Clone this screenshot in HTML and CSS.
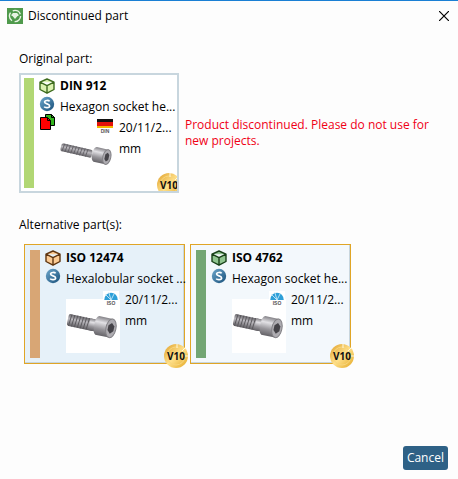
FILE: index.html
```html
<!DOCTYPE html>
<html lang="en">
<head>
  <meta charset="UTF-8">
  <meta name="viewport" content="width=device-width, initial-scale=1">
  <title>Discontinued part</title>
  <link rel="stylesheet" href="styles.css">
</head>
<body>

  <!-- shared icons -->
  <svg class="sprite" aria-hidden="true">
    <defs>
      <linearGradient id="blueBall" x1="0" y1="0" x2="1" y2="1">
        <stop offset="0" stop-color="#6fa8cc"/>
        <stop offset="1" stop-color="#174f7a"/>
      </linearGradient>
      <linearGradient id="gold" x1="0" y1="0" x2="1" y2="1">
        <stop offset="0" stop-color="#dfa02a"/>
        <stop offset="0.5" stop-color="#ffe08a"/>
        <stop offset="1" stop-color="#e3a620"/>
      </linearGradient>
      <linearGradient id="steel" x1="0" y1="0" x2="0" y2="1">
        <stop offset="0" stop-color="#858388"/>
        <stop offset="0.3" stop-color="#e2e1e5"/>
        <stop offset="0.65" stop-color="#98969b"/>
        <stop offset="1" stop-color="#656368"/>
      </linearGradient>
      <linearGradient id="thread" x1="0" y1="0" x2="0" y2="1">
        <stop offset="0" stop-color="#656368"/>
        <stop offset="0.4" stop-color="#bcbabf"/>
        <stop offset="1" stop-color="#5f5d62"/>
      </linearGradient>
    </defs>

    <symbol id="cube" viewBox="0 0 16 16">
      <path d="M8 1 15 4.2V11.5L8 15.2 1 11.5V4.2Z M1 4.2 8 7.6 15 4.2 M8 7.6V15.2"
            stroke="currentColor" stroke-width="1.4" stroke-linejoin="round"/>
    </symbol>

    <symbol id="standard" viewBox="0 0 16 16">
      <circle cx="8" cy="8" r="7.2" fill="url(#blueBall)"/>
      <path d="M10.6 5.4C9.9 4.2 5.6 3.9 5.6 6.1 5.6 8.3 10.6 7.4 10.6 9.9 10.6 12.2 6 12 5.2 10.6"
            fill="none" stroke="#fff" stroke-width="1.7"/>
    </symbol>

    <symbol id="screw" viewBox="0 0 54 30">
      <g transform="rotate(12 27 15)">
        <rect x="1" y="8" width="28" height="12" rx="2" fill="url(#thread)"/>
        <path d="M4 8l-1 12M7 8l-1 12M10 8l-1 12M13 8l-1 12M16 8l-1 12M19 8l-1 12M22 8l-1 12"
              stroke="#59575c" stroke-width="0.9"/>
        <rect x="23" y="8" width="7" height="12" fill="url(#steel)"/>
        <path d="M31 4H45V23H31Q28 22 28 13.5 28 5 31 4Z" fill="url(#steel)"/>
        <ellipse cx="45" cy="13.5" rx="5" ry="9.5" fill="#aeacb1" stroke="#828085"/>
        <path d="M45 8 48 11V16L45 19 42 16V11Z" fill="#454348"/>
      </g>
    </symbol>

    <symbol id="screwLong" viewBox="0 0 54 30">
      <g transform="rotate(13 27 15)">
        <rect x="0" y="10" width="32" height="8" rx="2" fill="url(#thread)"/>
        <path d="M3 10l-1 8M6 10l-1 8M9 10l-1 8M12 10l-1 8M15 10l-1 8M18 10l-1 8M21 10l-1 8M24 10l-1 8M27 10l-1 8"
              stroke="#605e63" stroke-width="0.8"/>
        <path d="M35 6H47V21H35Q32 20 32 13.5 32 7 35 6Z" fill="url(#steel)"/>
        <ellipse cx="47" cy="13.5" rx="4" ry="7.5" fill="#aeacb1" stroke="#828085"/>
        <path d="M47 9 49 11V16L47 18 45 16V11Z" fill="#454348"/>
      </g>
    </symbol>

    <symbol id="isoArc" viewBox="0 0 14 8">
      <path d="M1 8A6 6.500 0 0 1 13 8Z" fill="#2d9fd8"/>
      <path d="M7 8 2 3M7 8 5 1M7 8 10 2" stroke="#c9e9f8" stroke-width="0.8"/>
    </symbol>

    <symbol id="coin" viewBox="0 0 24 24">
      <circle cx="12" cy="12" r="12" fill="url(#gold)"/>
      <circle cx="12" cy="12" r="9" fill="none" stroke="#f8d67c" stroke-width="1"/>
      <path d="M13 0V4M21 4 18 7M24 12H21" stroke="#fff8df" stroke-width="1"/>
    </symbol>
  </svg>

  <div class="dialog">
    <header class="titlebar">
      <svg class="app-icon" viewBox="0 0 16 16" aria-hidden="true">
        <rect width="16" height="16" fill="#4f9a4c"/>
        <circle cx="8" cy="8" r="5.6" fill="none" stroke="#e6f3e2" stroke-width="1.4" stroke-dasharray="9 2.7"/>
        <path d="M4.500 6.500 6 5H10L11.500 6.500V8H10.500L8 11 5.500 8H4.500Z" fill="#e6f3e2"/>
      </svg>
      <h1>Discontinued part</h1>
      <button type="button" class="close" aria-label="Close">
        <svg viewBox="0 0 10 10" aria-hidden="true"><path d="M0 0 10 10M10 0 0 10" stroke="#000" stroke-width="1.2"/></svg>
      </button>
    </header>

    <main>
      <h2>Original part:</h2>
      <div class="original">
        <article class="card">
          <div class="bar lime"></div>
          <div class="icons">
            <svg class="icon cube-lime"><use href="#cube"/></svg>
            <svg class="icon"><use href="#standard"/></svg>
            <svg class="icon" viewBox="0 0 16 16">
              <path d="M6.500 0.500H12.500L15.500 3.500V11.500H6.500Z" fill="#32b41e" stroke="#000"/>
              <path d="M12.500 0.500V3.500H15.500" fill="none" stroke="#000"/>
              <path d="M1.500 3.500H8.500L11.500 6.500V15.500H1.500Z" fill="#f00" stroke="#000"/>
              <path d="M8.500 3.500V6.500H11.500" fill="none" stroke="#000"/>
            </svg>
          </div>
          <div class="info">
            <h3>DIN 912</h3>
            <p>Hexagon socket he...</p>
            <div class="details">
              <div class="thumb">
                <svg class="screw"><use href="#screwLong"/></svg>
                <div class="logo din"><span class="flag"></span><span>DIN</span></div>
              </div>
              <div class="meta">
                <p>20/11/2...</p>
                <p>mm</p>
              </div>
            </div>
          </div>
          <div class="badge"><svg><use href="#coin"/></svg><span>V10</span></div>
        </article>
        <p class="warning">Product discontinued. Please do not use for new projects.</p>
      </div>

      <h2>Alternative part(s):</h2>
      <div class="alternatives">
        <article class="card option selected">
          <div class="bar orange"></div>
          <div class="icons">
            <svg class="icon cube-orange"><use href="#cube"/></svg>
            <svg class="icon"><use href="#standard"/></svg>
          </div>
          <div class="info">
            <h3>ISO 12474</h3>
            <p>Hexalobular socket ...</p>
            <div class="details">
              <div class="thumb">
                <svg class="screw"><use href="#screw"/></svg>
                <div class="logo iso"><svg><use href="#isoArc"/></svg><span>ISO</span></div>
              </div>
              <div class="meta">
                <p>20/11/2...</p>
                <p>mm</p>
              </div>
            </div>
          </div>
          <div class="badge"><svg><use href="#coin"/></svg><span>V10</span></div>
        </article>

        <article class="card option">
          <div class="bar green"></div>
          <div class="icons">
            <svg class="icon cube-green"><use href="#cube"/></svg>
            <svg class="icon"><use href="#standard"/></svg>
          </div>
          <div class="info">
            <h3>ISO 4762</h3>
            <p>Hexagon socket he...</p>
            <div class="details">
              <div class="thumb">
                <svg class="screw"><use href="#screw"/></svg>
                <div class="logo iso"><svg><use href="#isoArc"/></svg><span>ISO</span></div>
              </div>
              <div class="meta">
                <p>20/11/2...</p>
                <p>mm</p>
              </div>
            </div>
          </div>
          <div class="badge"><svg><use href="#coin"/></svg><span>V10</span></div>
        </article>
      </div>
    </main>

    <footer>
      <button type="button" class="cancel">Cancel</button>
    </footer>
  </div>

</body>
</html>
```

FILE: styles.css
```css
* { box-sizing: border-box; }
body {
  margin: 0;
  background: #fdfdfd;
  color: #000;
  font-family: "Open Sans", "Noto Sans", sans-serif;
  font-size: 12px;
  line-height: 16px;
}
h1, h2, h3, p { margin: 0; }
h1, h2 {
  font-size: 12px;
  font-weight: normal;
}
svg { display: block; }
.sprite {
  position: absolute;
  width: 0;
  height: 0;
}

.dialog {
  display: flex;
  flex-direction: column;
  min-height: 100vh;
  border-top: 1px solid #1a7fd4;
}
.titlebar {
  display: flex;
  align-items: center;
  gap: 5px;
  height: 30px;
  padding: 0 9px 0 7px;
}
.titlebar h1 { flex: 1; }
.app-icon {
  width: 16px;
  height: 16px;
}
.close {
  padding: 0;
  border: 0;
  background: none;
}
.close svg {
  width: 10px;
  height: 10px;
}

main {
  flex: 1;
  padding: 20px 19px 0;
}
main h2 { margin-bottom: 6px; }

/* part cards */
.original {
  display: flex;
  align-items: center;
  gap: 6px;
  margin-bottom: 24px;
}
.original .card { overflow: hidden; }
.warning {
  flex: 1;
  color: #f00016;
}
.alternatives {
  display: flex;
  gap: 5px;
  padding: 5px 5px 0;
}
.card {
  position: relative;
  display: flex;
  flex: none;
  width: 160px;
  height: 120px;
  padding: 3px;
  border: 2px solid #c8d6de;
  background: #fff;
}
.option {
  width: 161px;
  padding: 5px;
  border: 1px solid #e0a526;
  background: #f3f8fc;
  box-shadow: inset 0 -1px #c8d6de, inset -1px 0 #c8d6de;
}
.selected { background: #e6f1f9; }

.bar {
  width: 10px;
  flex: none;
}
.lime { background: #b1d774; }
.orange { background: #d8a675; }
.green { background: #73a674; }

.icons {
  display: flex;
  flex-direction: column;
  gap: 2px;
  width: 16px;
  margin-left: 5px;
}
.icon {
  width: 16px;
  height: 16px;
}
.cube-lime { color: #3d6b1d; fill: #dcf2b0; }
.cube-orange { color: #5e3510; fill: #fbcb94; }
.cube-green { color: #173f18; fill: #8fc48f; }

.info {
  flex: 1;
  min-width: 0;
  margin-left: 5px;
  white-space: nowrap;
}
.info h3 {
  font-size: 12px;
  line-height: 16px;
}
.info p { line-height: 21px; }
.info > p { margin-top: 2px; }
.details {
  display: flex;
  gap: 5px;
}
.thumb {
  position: relative;
  display: flex;
  align-items: center;
  width: 54px;
  height: 54px;
  margin-top: 10px;
  background: #fff;
}
.screw {
  width: 54px;
  height: 30px;
}

/* standards body logo over the thumbnail corner */
.logo {
  position: absolute;
  top: -8px;
  right: 1px;
  width: 16px;
  height: 16px;
  background: #fff;
  color: #555;
  font: bold 5px/6px "Liberation Sans", sans-serif;
  text-align: center;
}
.logo svg {
  width: 16px;
  height: 9px;
}
.logo span { display: block; }
.flag {
  height: 9px;
  background: linear-gradient(#111 3px, #e3120b 3px, #e3120b 7px, #f5b800 7px);
}

.badge {
  position: absolute;
  right: -4px;
  bottom: -5px;
  display: grid;
  place-items: center;
  width: 24px;
  height: 24px;
  color: #111;
  font: bold 10px/12px "Open Sans", sans-serif;
}
.original .badge { bottom: -6px; }
.badge svg, .badge span { grid-area: 1 / 1; }
.badge svg {
  width: 24px;
  height: 24px;
}

footer {
  display: flex;
  justify-content: flex-end;
  padding: 0 10px 9px;
}
.cancel {
  height: 24px;
  padding: 0 4px;
  border: 0;
  border-radius: 3px;
  background: #2e6186;
  color: #fff;
  font: inherit;
}
```
